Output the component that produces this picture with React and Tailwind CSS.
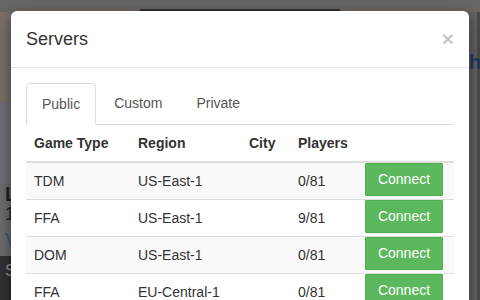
import React from "react";

const rows = [
  { type: "TDM", region: "US-East-1", city: "", players: "0/81" },
  { type: "FFA", region: "US-East-1", city: "", players: "9/81" },
  { type: "DOM", region: "US-East-1", city: "", players: "0/81" },
  { type: "FFA", region: "EU-Central-1", city: "", players: "0/81" },
];

export default function App() {
  return (
    <div
      className="relative w-[480px] h-[300px] overflow-hidden bg-[#6b6a69]"
      style={{ fontFamily: '"Liberation Sans", Arial, sans-serif' }}
    >
      {/* faux page behind the overlay (already dimmed colours) */}
      <div className="flex flex-col h-full">
        <div className="h-[12px] bg-[#6a6663] flex items-end justify-center">
          <div className="w-[200px] h-[3px] bg-[#2f2f2f]" />
        </div>
        <div className="flex flex-1">
          <div className="w-[11px] flex flex-col">
            <div className="h-[90px] bg-[#7a7069]" />
            <div className="h-[82px] bg-[#6f7174]" />
            <div className="h-[20px] bg-[#6c6e70] text-[#222] text-[20px] font-bold leading-[20px] pl-[5px]">L</div>
            <div className="h-[20px] bg-[#6c6e70] text-[#222] text-[18px] leading-[20px] pl-[5px]">1</div>
            <div className="h-[32px] bg-[#6c6e70] text-[#3a5a78] text-[20px] leading-[32px] pl-[5px]">V</div>
            <div className="flex-1 bg-[#2f3134] text-[#9a9a9a] text-[16px] leading-[30px] pl-[5px]">S</div>
          </div>
          <div className="flex-1" />
          <div className="w-[11px] flex flex-col bg-[#626262] border-r-[3px] border-[#4a4a4a]">
            <div className="h-[40px]" />
            <div className="text-[#1f3a5a] text-[20px] font-bold leading-[20px]">h</div>
          </div>
        </div>
      </div>

      {/* modal over the page */}
      <div className="absolute left-[11px] top-[11px] w-[458px] h-[320px] bg-white rounded-[6px] shadow-[0_5px_15px_rgba(0,0,0,0.5)] text-[#333]">
        <div className="flex items-start justify-between px-[15px] pt-[15px] pb-[15px] border-b border-[#e5e5e5]">
          <h4 className="text-[18px] leading-[26px]">Servers</h4>
          <span className="text-[21px] font-bold leading-[21px] text-[#c7c7c7] mt-[2px]">×</span>
        </div>
        <div className="px-[15px] pt-[15px]">
          <div className="flex gap-[2px] border-b border-[#ddd] text-[14px] leading-[20px]">
            <div className="px-[15px] py-[10px] border border-[#ddd] border-b-white rounded-t-[4px] -mb-px bg-white text-[#555]">
              Public
            </div>
            <div className="px-[16px] py-[10px] text-[#555]">Custom</div>
            <div className="px-[16px] py-[10px] text-[#555]">Private</div>
          </div>
          <div className="text-[14px] leading-[20px]">
            <div className="flex font-bold border-b-2 border-[#ddd]">
              <div className="w-[104px] p-[8px]">Game Type</div>
              <div className="w-[111px] p-[8px]">Region</div>
              <div className="w-[49px] p-[8px]">City</div>
              <div className="w-[67px] p-[8px]">Players</div>
              <div className="flex-1 p-[8px]" />
            </div>
            {rows.map((r, i) => (
              <div
                key={i}
                className={`flex items-center ${i > 0 ? "h-[37px] border-t border-[#ddd]" : "h-[36px]"} ${i % 2 === 0 ? "bg-[#f9f9f9]" : "bg-white"}`}
              >
                <div className="w-[104px] px-[8px]">{r.type}</div>
                <div className="w-[111px] px-[8px]">{r.region}</div>
                <div className="w-[49px] px-[8px]">{r.city}</div>
                <div className="w-[67px] px-[8px]">{r.players}</div>
                <div className="flex-1 pl-[8px] self-start">
                  <div className="w-[78px] h-[33px] flex items-center justify-center bg-[#5cb85c] border border-[#4cae4c] rounded-[1px] text-white text-[14px] pb-[2px]">
                    Connect
                  </div>
                </div>
              </div>
            ))}
          </div>
        </div>
      </div>
    </div>
  );
}
